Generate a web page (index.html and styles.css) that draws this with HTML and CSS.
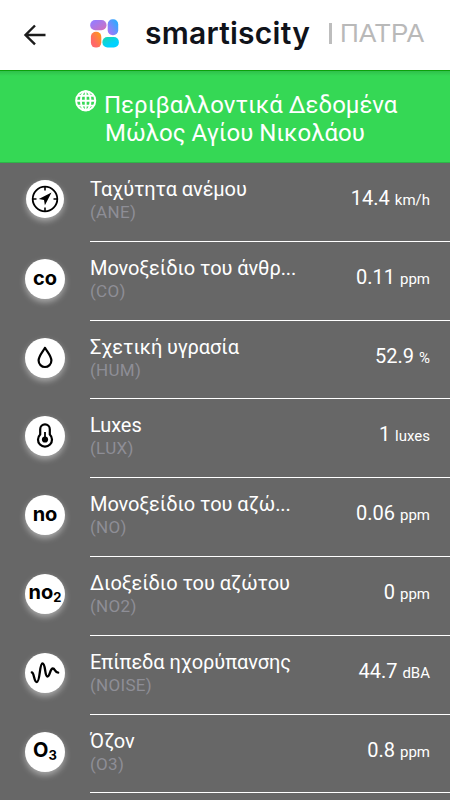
FILE: index.html
```html
<!DOCTYPE html>
<html lang="el">
<head>
  <meta charset="UTF-8">
  <title>smartiscity</title>
  <link rel="stylesheet" href="styles.css">
</head>
<body>
  <header class="topbar">
    <svg class="back" width="24" height="24" viewBox="0 0 24 24">
      <path d="M22.5 12H2.5M12 2.500L2.500 12l9.500 9.300" fill="none" stroke="#1c1c1c" stroke-width="2.400"/>
    </svg>
    <svg class="logo" width="30" height="30" viewBox="0 0 30 30">
      <defs>
        <linearGradient id="purple" x1="0" y1="0" x2="1" y2="1">
          <stop offset="0.2" stop-color="#9a7bfa"/>
          <stop offset="1" stop-color="#d56eb8"/>
        </linearGradient>
        <linearGradient id="blue" x1="1" y1="0" x2="0" y2="1">
          <stop offset="0" stop-color="#16b4ff"/>
          <stop offset="0.8" stop-color="#9a7bfa"/>
        </linearGradient>
        <linearGradient id="orange" x1="1" y1="0" x2="0.3" y2="0.7">
          <stop offset="0" stop-color="#ff9e10"/>
          <stop offset="1" stop-color="#ff6868"/>
        </linearGradient>
        <linearGradient id="cyan" x1="0" y1="0" x2="0.8" y2="1">
          <stop offset="0" stop-color="#1fd5a6"/>
          <stop offset="0.7" stop-color="#00d2ff"/>
        </linearGradient>
      </defs>
      <rect x="0.200" y="1" width="16.300" height="10.3" rx="5" fill="url(#purple)"/>
      <rect x="17.700" y="0.3" width="10.5" height="16" rx="5" fill="url(#blue)"/>
      <rect x="0.900" y="12.8" width="10.4" height="15.8" rx="5" fill="url(#orange)"/>
      <rect x="12.400" y="18" width="16.500" height="10.4" rx="5" fill="url(#cyan)"/>
    </svg>
    <span class="brand">smartiscity</span>
    <span class="divider"></span>
    <span class="city">ΠΑΤΡΑ</span>
  </header>

  <div class="station">
    <svg class="globe" width="22" height="22" viewBox="0 0 22 22">
      <g fill="none" stroke="#fff" stroke-width="1.9">
        <circle cx="10.700" cy="10.700" r="9.600"/>
        <ellipse cx="10.700" cy="10.700" rx="4.800" ry="9.600"/>
        <path d="M10.700 1.100v19.200M1.100 10.700h19.200M3 5.800h15.400M3 15.600h15.400"/>
      </g>
    </svg>
    <div class="station-name">
      <div class="line1">Περιβαλλοντικά Δεδομένα</div>
      <div class="line2">Μώλος Αγίου Νικολάου</div>
    </div>
  </div>

  <div class="list">
    <div class="row">
      <div class="icon small">
        <svg width="30" height="30" viewBox="0 0 30 30">
          <circle cx="15" cy="15" r="12.3" fill="none" stroke="#000" stroke-width="1.8"/>
          <path d="M15 2.5v4M15 23.5v4M2.5 15h4M23.5 15h4" stroke="#000" stroke-width="1.6"/>
          <path d="M21.5 8.500L8.800 15l5.200.9.900 5.400z" fill="#000"/>
        </svg>
      </div>
      <div class="content">
        <div class="label"><div class="name">Ταχύτητα ανέμου</div><div class="code">(ANE)</div></div>
        <div class="value">14.4 <small>km/h</small></div>
      </div>
    </div>
    <div class="row">
      <div class="icon"><b>co</b></div>
      <div class="content">
        <div class="label"><div class="name">Μονοξείδιο του άνθρ...</div><div class="code">(CO)</div></div>
        <div class="value">0.11 <small>ppm</small></div>
      </div>
    </div>
    <div class="row">
      <div class="icon">
        <svg width="30" height="30" viewBox="0 0 30 30">
          <path d="M15 4.800C12.800 8.800 8.600 13 8.600 17.600a6.400 6.400 0 0 0 12.800 0C21.400 13 17.200 8.800 15 4.800z" fill="none" stroke="#000" stroke-width="2.200" stroke-linejoin="round"/>
        </svg>
      </div>
      <div class="content">
        <div class="label"><div class="name">Σχετική υγρασία</div><div class="code">(HUM)</div></div>
        <div class="value">52.9 <small>%</small></div>
      </div>
    </div>
    <div class="row">
      <div class="icon">
        <svg width="30" height="30" viewBox="0 0 30 30">
          <path d="M10.200 13.500V8.200a4.800 4.800 0 0 1 9.600 0V13.500a7 7 0 1 1-9.600 0z" fill="none" stroke="#000" stroke-width="2.200" stroke-linejoin="round"/>
          <path d="M15 11v8" stroke="#000" stroke-width="1.8"/>
          <circle cx="15" cy="18.500" r="3.100" fill="#000"/>
        </svg>
      </div>
      <div class="content">
        <div class="label"><div class="name">Luxes</div><div class="code">(LUX)</div></div>
        <div class="value">1 <small>luxes</small></div>
      </div>
    </div>
    <div class="row">
      <div class="icon"><b>no</b></div>
      <div class="content">
        <div class="label"><div class="name">Μονοξείδιο του αζώ...</div><div class="code">(NO)</div></div>
        <div class="value">0.06 <small>ppm</small></div>
      </div>
    </div>
    <div class="row">
      <div class="icon"><b>no<i>2</i></b></div>
      <div class="content">
        <div class="label"><div class="name">Διοξείδιο του αζώτου</div><div class="code">(NO2)</div></div>
        <div class="value">0 <small>ppm</small></div>
      </div>
    </div>
    <div class="row">
      <div class="icon">
        <svg width="30" height="30" viewBox="0 0 30 30">
          <path d="M1.800 14.500c2.500 0 2 9.500 5 9.500 3.500 0 2.500-18.500 5.700-18.500 3.300 0 2 13 5 13 2.500 0 2.500-8 5.300-8 2.300 0 2.200 4.200 5.400 4.200" fill="none" stroke="#000" stroke-width="2.300" stroke-linecap="round"/>
        </svg>
      </div>
      <div class="content">
        <div class="label"><div class="name">Επίπεδα ηχορύπανσης</div><div class="code">(NOISE)</div></div>
        <div class="value">44.7 <small>dBA</small></div>
      </div>
    </div>
    <div class="row">
      <div class="icon"><b>O<i>3</i></b></div>
      <div class="content">
        <div class="label"><div class="name">Όζον</div><div class="code">(O3)</div></div>
        <div class="value">0.8 <small>ppm</small></div>
      </div>
    </div>
  </div>
</body>
</html>
```
FILE: styles.css
```css
* {
  box-sizing: border-box;
}
body {
  margin: 0;
  height: 800px;
  overflow: hidden;
  background: #676767;
  color: #fff;
  font-family: Roboto, sans-serif;
}
.topbar {
  height: 70px;
  display: flex;
  align-items: center;
  background: #fff;
  padding-left: 23px;
}
.back {
  margin-right: 43px;
}
.logo {
  margin-top: -3px;
  margin-right: 25px;
}
.brand {
  width: 184px;
  font-family: Inter, sans-serif;
  font-size: 30px;
  font-weight: 600;
  letter-spacing: 0.25px;
  line-height: 40px;
  margin-top: -4px;
  color: #10131a;
}
.divider {
  width: 3px;
  height: 21px;
  margin-top: -4px;
  margin-right: 8px;
  background: #bdbdbd;
}
.city {
  font-family: "Liberation Sans", sans-serif;
  font-size: 26px;
  letter-spacing: 0.3px;
  line-height: 30px;
  margin-top: -4px;
  color: #b9b9b9;
}
.station {
  height: 93px;
  display: flex;
  align-items: flex-start;
  padding: 19px 0 0 75px;
  border-top: 1px solid #0ba10b;
  border-bottom: 1px solid #2db648;
  background: linear-gradient(#2fc04b, #35d855 5px);
}
.globe {
  margin-right: 7px;
}
.station-name {
  margin-top: 1px;
  font-size: 24px;
  line-height: 28px;
}
.line2 {
  padding-left: 1px;
}
.row {
  height: 78.8px;
  display: flex;
  padding-left: 25px;
}
.icon {
  width: 40px;
  height: 40px;
  margin-top: 17px;
  margin-right: 25px;
  flex: none;
  display: flex;
  align-items: center;
  justify-content: center;
  border-radius: 50%;
  background: #fff;
  color: #000;
  box-shadow: 0 3px 6px rgba(255,255,255,0.45);
}
.icon.small {
  width: 38px;
  height: 38px;
  margin: 17px 26px 0 1px;
}
.icon b {
  font-family: Inter, sans-serif;
  font-size: 20px;
  font-weight: 700;
  line-height: 24px;
  margin-top: -2px;
}
.icon i {
  font-size: 13px;
  font-style: normal;
  position: relative;
  top: 3px;
}
.content {
  flex: 1;
  display: flex;
  justify-content: space-between;
  padding-right: 20px;
  border-bottom: 1px solid #fff;
}
.name {
  margin-top: 14px;
  font-size: 20px;
  letter-spacing: -0.08px;
  line-height: 24px;
}
.code {
  font-size: 17px;
  letter-spacing: 0.3px;
  line-height: 23px;
  color: #8e8e96;
}
.value {
  padding-top: 23px;
  font-size: 20px;
  line-height: 24px;
}
.value small {
  font-size: 15px;
}
```
